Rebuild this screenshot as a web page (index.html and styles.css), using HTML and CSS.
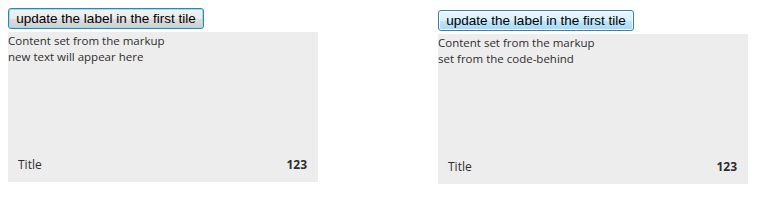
FILE: index.html
```html
<!DOCTYPE html>
<html>
<head>
    <meta charset="utf-8">
    <title>Tiles</title>
    <link rel="stylesheet" href="styles.css">
</head>
<body>
    <div class="container">
        <div class="column first">
            <button class="update-button focused">update the label in the first tile</button>
            <div class="tile">
                <div class="tile-content">
                    Content set from the markup<br>
                    new text will appear here
                </div>
                <div class="tile-footer">
                    <span class="tile-title">Title</span>
                    <span class="tile-count">123</span>
                </div>
            </div>
        </div>
        <div class="column second">
            <button class="update-button hovered">update the label in the first tile</button>
            <div class="tile">
                <div class="tile-content">
                    Content set from the markup<br>
                    set from the code-behind
                </div>
                <div class="tile-footer">
                    <span class="tile-title">Title</span>
                    <span class="tile-count">123</span>
                </div>
            </div>
        </div>
    </div>
</body>
</html>
```

FILE: styles.css
```css
body {
    margin: 0;
    background: #ffffff;
    font-family: "Open Sans", "Noto Sans", sans-serif;
    color: #2d2d2d;
}
.container {
    display: flex;
    gap: 120px;
    padding-left: 8px;
}
.column {
    display: flex;
    flex-direction: column;
    align-items: flex-start;
    width: 310px;
}
.column.first {
    padding-top: 8px;
}
.column.second {
    padding-top: 10px;
}
.update-button {
    font-family: "Liberation Sans", Arial, sans-serif;
    font-size: 13.5px;
    color: #000;
    height: 21px;
    width: 196px;
    padding: 0;
    margin: 0 0 3px 0;
    border: 1px solid #3c7fb1;
    border-radius: 3px;
}
.update-button.focused {
    background: linear-gradient(#f2f2f2 0%, #ebebeb 50%, #dddddd 51%, #cfcfcf 100%);
    box-shadow: inset 0 0 0 1px #8ce3f7;
}
.update-button.hovered {
    background: linear-gradient(#eaf6fd 0%, #d9f0fc 50%, #bee6fd 51%, #a7d9f5 100%);
    box-shadow: inset 0 0 0 1px #f4fbfe;
}
.tile {
    width: 310px;
    height: 150px;
    background: #ededed;
    display: flex;
    flex-direction: column;
    justify-content: space-between;
}
.tile-content {
    font-size: 11.5px;
    line-height: 16px;
    padding-top: 1px;
}
.tile-footer {
    display: flex;
    justify-content: space-between;
    align-items: center;
    padding: 0 11px 9px 10px;
    font-size: 12px;
    line-height: 16px;
}
.tile-count {
    font-weight: bold;
}
```
